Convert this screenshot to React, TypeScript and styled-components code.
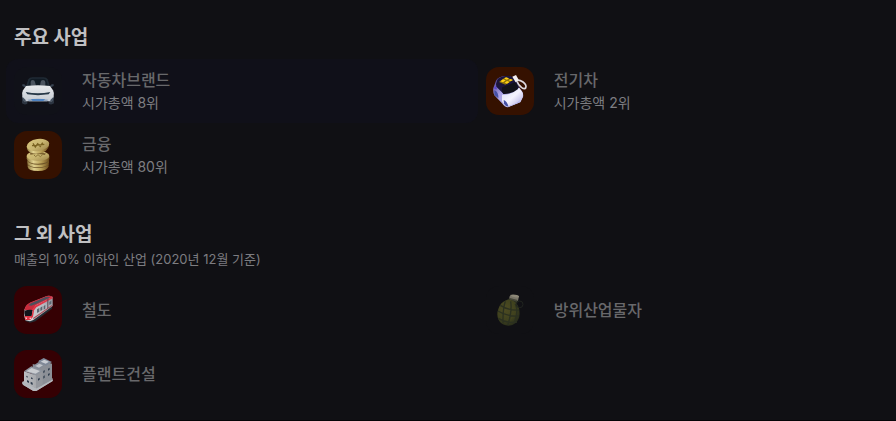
import React from 'react';
import styled, { createGlobalStyle } from 'styled-components';

const GlobalStyle = createGlobalStyle`
  * { box-sizing: border-box; }
  body {
    margin: 0;
    background: #101014;
    font-family: Inter, "Noto Sans CJK KR", sans-serif;
  }
`;

const Page = styled.main`
  padding: 24px 0 14px 6px;
  border-bottom: 1px solid #050507;
`;

const Section = styled.section`
  & + & { margin-top: 34px; }
`;

const SectionHeader = styled.header<{ $gap: number }>`
  padding: 0 8px;
  margin-bottom: ${(p) => p.$gap}px;
`;

const Heading = styled.h2`
  margin: 0;
  font-family: "Noto Sans CJK KR", sans-serif;
  font-size: 19px;
  line-height: 24px;
  font-weight: 700;
  color: #c0c0c2;
`;

const Caption = styled.p`
  margin: 4px 0 0;
  font-size: 13px;
  line-height: 20px;
  color: #7d7d81;
`;

const BusinessGrid = styled.ul`
  display: grid;
  grid-template-columns: 53fr 47fr;
  margin: 0;
  padding: 0;
  list-style: none;
`;

const BusinessButton = styled.button<{ $active?: boolean }>`
  display: flex;
  align-items: center;
  gap: 20px;
  width: 100%;
  height: 64px;
  padding: 8px;
  border: 0;
  border-radius: 12px;
  background: ${(p) => (p.$active ? '#101019' : 'transparent')};
  font-family: inherit;
  text-align: left;
  cursor: pointer;
`;

const IconTile = styled.span<{ $color: string }>`
  flex: none;
  width: 48px;
  height: 48px;
  border-radius: 13px;
  overflow: hidden;
  background: ${(p) => p.$color};

  svg { display: block; width: 100%; height: 100%; }
`;

const Labels = styled.span`
  display: flex;
  flex-direction: column;
`;

const Name = styled.span`
  font-size: 16px;
  line-height: 24px;
  font-weight: 500;
  color: #68686b;
`;

const Rank = styled.span`
  font-size: 14px;
  line-height: 22px;
  color: #7d7d81;
`;

const CarIcon = () => (
  <svg viewBox="12 9 144 144" aria-hidden="true">
    <defs>
      <linearGradient id="carBody" x1="0" y1="0" x2="0" y2="1">
        <stop offset="0" stopColor="#e8eaec" />
        <stop offset="1" stopColor="#c4cad2" />
      </linearGradient>
    </defs>
    <path d="M36 97h16v22q-8 5-16-1zM116 97h16v21q-8 6-16 1z" fill="#2c3541" />
    <path d="M48 67l7-21q3-6 12-6h34q9 0 12 6l7 21z" fill="#1f2a34" />
    <path d="M54 65l6-17q2-4 8-4h32q6 0 8 4l6 17z" fill="#111b24" />
    <path d="M62 65V54q0-6 6-6t7 6l3 11zM90 65l2-11q1-6 7-6t7 6v11z" fill="#4b545f" />
    <path d="M37 61h6l6 6-4 3-8-4zM131 61h-6l-6 6 4 3 8-4z" fill="#384350" />
    <path d="M48 66q36-5 72 0l9 13q4 6 2 19l-5 14H42l-5-14q-2-13 2-19z" fill="url(#carBody)" />
    <path d="M47 84q37 8 74 0l-5 7q-32 5-64 0z" fill="#263746" />
    <path d="M38 99l9 9v4h-7zM130 99l-9 9v4h7z" fill="#465261" />
    <path d="M53 107q31-6 62 0l-4 5H57z" fill="#8fa3bb" />
    <path d="M63 106h42l-5 4H68z" fill="#3978c4" />
  </svg>
);

const ElectricCarIcon = () => (
  <svg viewBox="12 9 144 144" aria-hidden="true">
    <defs>
      <linearGradient id="evSide" x1="0" y1="0" x2="1" y2="1">
        <stop offset="0" stopColor="#3a2b86" />
        <stop offset=".4" stopColor="#a8a0e4" />
        <stop offset="1" stopColor="#c4c5ee" />
      </linearGradient>
      <linearGradient id="evHood" x1="0" y1="0" x2="1" y2="1">
        <stop offset="0" stopColor="#d7dcef" />
        <stop offset=".5" stopColor="#f5f3ff" />
        <stop offset="1" stopColor="#a6a1df" />
      </linearGradient>
    </defs>
    <path d="M34 72l8-22q6-12 28-14 15-1 23 6l18 28 9 12q5 7 3 17l-8 16-37 15q-9 1-18-12L37 94q-5-12-3-22z" fill="url(#evSide)" />
    <path d="M42 60l4-13q8-9 24-11 16-2 24 5l14 17 3 14-46 18-22-22z" fill="#1b153c" />
    <path d="M60 92q24 4 51-20l9 11q5 8 1 18l-6 13-37 15q-8-1-18-18z" fill="url(#evHood)" />
    <path d="M61 70l38-15q9 8 9 20-18 16-44 15-6-10-3-20z" fill="#111119" />
    <path d="M51 54l19-14 22 8-22 14z" fill="#8c730b" />
    <path d="M55 52l8-6 8 3-8 6zM67 44l5-4 9 3-6 4zM68 56l7-5 8 3-8 5zM80 49l6-4 7 3-7 4z" fill="#ffcf14" />
    <path d="M37 79q8 1 12 16v8l-12-10zM65 108q9 2 15 20-9 0-14-9z" fill="#4550a5" />
    <path d="M40 66l5 5-2 6-7-4z" fill="#5b45cd" />
    <path d="M103 49q10-2 20 5 12 9 8 18-6 5-14-3-8-6-11-15z" fill="none" stroke="#ded9df" strokeWidth="5" strokeLinejoin="round" />
    <path d="M91 38l11-5 8 14-9 8z" fill="#f2eef1" />
    <path d="M81 125q22-5 34-18l-5 9-27 11z" fill="#b3b3ea" />
  </svg>
);

const CoinsIcon = () => (
  <svg viewBox="12 12 144 144" aria-hidden="true">
    <defs>
      <linearGradient id="coinFace" x1="0" y1="0" x2="1" y2="1">
        <stop offset="0" stopColor="#d8c57c" />
        <stop offset=".5" stopColor="#c9b671" />
        <stop offset="1" stopColor="#9a8146" />
      </linearGradient>
      <linearGradient id="coinEdge">
        <stop offset="0" stopColor="#8e793f" />
        <stop offset=".3" stopColor="#e2d391" />
        <stop offset=".65" stopColor="#b79e55" />
        <stop offset="1" stopColor="#6e4c1a" />
      </linearGradient>
    </defs>
    <path d="M53 112v7q2 13 31 13t32-14v-7z" fill="url(#coinEdge)" />
    <ellipse cx="84" cy="111" rx="32" ry="12" fill="#6e5427" />
    <path d="M52 101v7q4 13 32 13t33-13v-7z" fill="url(#coinEdge)" />
    <ellipse cx="85" cy="101" rx="32" ry="12" fill="#6e5427" />
    <path d="M50 87v8q4 15 34 15t34-14v-9z" fill="url(#coinEdge)" />
    <ellipse cx="84" cy="87" rx="34" ry="15" fill="url(#coinFace)" />
    <path d="M60 77q12-4 26-3t22 6l-4 4q-22-6-43-1z" fill="#7b6230" />
    <path d="M72 84l5 5 7-6 7 6 7-6" fill="none" stroke="#8c753a" strokeWidth="3" />
    <path d="M50 57q0 14 10 19 12 6 29 3 24-5 28-23l-1-8z" fill="url(#coinEdge)" />
    <ellipse cx="84" cy="54" rx="34" ry="18" transform="rotate(-8 84 54)" fill="url(#coinFace)" />
    <path d="M69 49l7 11 7-10 8 8 7-11M66 56l37-4" fill="none" stroke="#7a6322" strokeWidth="4" />
  </svg>
);

const TrainIcon = () => (
  <svg viewBox="12 12 144 144" aria-hidden="true">
    <defs>
      <linearGradient id="trainSide" x1="0" y1="1" x2="1" y2="0">
        <stop offset="0" stopColor="#d9d9dc" />
        <stop offset=".65" stopColor="#b8b9bf" />
        <stop offset="1" stopColor="#858991" />
      </linearGradient>
    </defs>
    <path d="M46 117l14 5 16-4 50-38v-8l-77 38z" fill="#252c33" />
    <path d="M44 82q4-14 18-20l49-20q9-3 17 3v27l-58 42-10 4-14-3q-6-17-2-33z" fill="url(#trainSide)" />
    <path d="M44 80q4-13 18-19l48-19q8-3 18 2L77 70l-9 14-24 1z" fill="#c92c3d" />
    <path d="M55 70l8-6 46-20 12 2-43 20-14 5z" fill="#4c505c" />
    <path d="M66 84l8-12 54-28v5L79 76l-9 12z" fill="#e33346" />
    <path d="M44 86q12-4 24-2l-3 18H45q-3-8-1-16z" fill="#11151b" />
    <path d="M44 102h21l3-17 4 1-3 18-8 10H46z" fill="#e13444" />
    <path d="M70 107l56-38v3l-56 40z" fill="#a84853" />
    <path d="M81 82l7-4v11l-7 4zM91 77l6-4v11l-6 3zM101 72l5-3v11l-5 3zM118 60l6-4v9l-6 4z" fill="#5b6670" />
    <path d="M112 51l3-2v29l-3 2z" fill="#5d434e" />
    <path d="M46 106l5 1v3h-4zM59 107h5l-3 4h-2z" fill="#fff0ef" />
  </svg>
);

const GrenadeIcon = () => (
  <svg viewBox="12 12 144 144" aria-hidden="true">
    <defs>
      <radialGradient id="grenadeBody" cx=".38" cy=".35" r=".75">
        <stop offset="0" stopColor="#4d4b22" />
        <stop offset=".6" stopColor="#3f411e" />
        <stop offset="1" stopColor="#22271a" />
      </radialGradient>
    </defs>
    <path d="M75 53l7-4 24 9-2 11-31-9z" fill="#2c2f21" />
    <path d="M72 55q18-5 30 8 11 12 11 32-1 18-12 28-14 12-30 7-15-3-22-18-6-15 0-31 6-19 23-26z" fill="url(#grenadeBody)" />
    <path d="M48 87q26 17 62 15M55 70q25 16 56 14M49 109q25 16 56 11M70 58q-8 24-7 66M86 58q5 31-9 72M100 65q10 25-2 55" fill="none" stroke="#2b3020" strokeWidth="4" />
    <path d="M82 45l4-7 25 4-3 15-25-6z" fill="#777366" />
    <ellipse cx="99" cy="42" rx="12" ry="4" transform="rotate(9 99 42)" fill="#8d8878" />
    <path d="M84 48l23 6-2 5-23-7z" fill="#454638" />
    <circle cx="113" cy="67" r="10" fill="none" stroke="#20241f" strokeWidth="3" />
  </svg>
);

const PlantIcon = () => (
  <svg viewBox="12 12 144 144" aria-hidden="true">
    <defs>
      <linearGradient id="plantFront">
        <stop offset="0" stopColor="#bdbfc3" />
        <stop offset="1" stopColor="#a6a8ac" />
      </linearGradient>
    </defs>
    <path d="M37 107l8-3 32 12 47-23 4 5v7l-48 29q-6 2-11 0l-29-17q-4-3-3-10z" fill="#b0b3b8" />
    <path d="M88 42l12 2 26 9v49l-38 20z" fill="#8b8f96" />
    <path d="M68 54l34 10v48l-30 13z" fill="#8b8f96" />
    <path d="M42 76l36 12v40l-36-19z" fill="url(#plantFront)" />
    <path d="M78 88l20-14v43l-20 11z" fill="#94979d" />
    <path d="M42 76l22-15 35 13-21 14z" fill="#8e949e" />
    <path d="M49 76l16-10 25 9-13 8z" fill="#c9ccd0" />
    <path d="M68 60l18-12 19 9-19 13z" fill="#858c99" />
    <path d="M76 60l12-7 11 5-12 7z" fill="#c0c3c9" />
    <path d="M84 46l17-10 25 12-18 11z" fill="#7e8898" />
    <path d="M92 47l11-6 14 6-10 6z" fill="#c9cdd3" />
    <path d="M49 89l4 2v4l-4-2zM63 94l5 2v4l-5-2zM51 102l6 3v6l-6-3zM62 107l6 3v7l-6-3zM84 98l5-3v6l-5 3zM100 75l4-3v7l-4 3zM100 91l4-3v7l-4 3zM114 68l5-3v6l-5 3zM114 84l5-3v6l-5 3z" fill="#303d4d" />
    <path d="M37 108l37 18 7 2 47-27v4l-48 29q-6 2-11 0l-29-17q-4-3-3-9z" fill="#b5b8bd" />
  </svg>
);

type Business = {
  name: string;
  rank?: string;
  color: string;
  icon: React.ReactNode;
  active?: boolean;
};

const mainBusinesses: Business[] = [
  { name: '자동차브랜드', rank: '시가총액 8위', color: '#101118', icon: <CarIcon />, active: true },
  { name: '전기차', rank: '시가총액 2위', color: '#351100', icon: <ElectricCarIcon /> },
  { name: '금융', rank: '시가총액 80위', color: '#351100', icon: <CoinsIcon /> },
];

const otherBusinesses: Business[] = [
  { name: '철도', color: '#350003', icon: <TrainIcon /> },
  { name: '방위산업물자', color: '#101014', icon: <GrenadeIcon /> },
  { name: '플랜트건설', color: '#350003', icon: <PlantIcon /> },
];

const BusinessList = ({ items }: { items: Business[] }) => (
  <BusinessGrid>
    {items.map((item) => (
      <li key={item.name}>
        <BusinessButton type="button" $active={item.active}>
          <IconTile $color={item.color}>{item.icon}</IconTile>
          <Labels>
            <Name>{item.name}</Name>
            {item.rank && <Rank>{item.rank}</Rank>}
          </Labels>
        </BusinessButton>
      </li>
    ))}
  </BusinessGrid>
);

export default function App() {
  return (
    <>
      <GlobalStyle />
      <Page>
        <Section>
          <SectionHeader $gap={11}>
            <Heading>주요 사업</Heading>
          </SectionHeader>
          <BusinessList items={mainBusinesses} />
        </Section>
        <Section>
          <SectionHeader $gap={9}>
            <Heading>그 외 사업</Heading>
            <Caption>매출의 10% 이하인 산업 (2020년 12월 기준)</Caption>
          </SectionHeader>
          <BusinessList items={otherBusinesses} />
        </Section>
      </Page>
    </>
  );
}
